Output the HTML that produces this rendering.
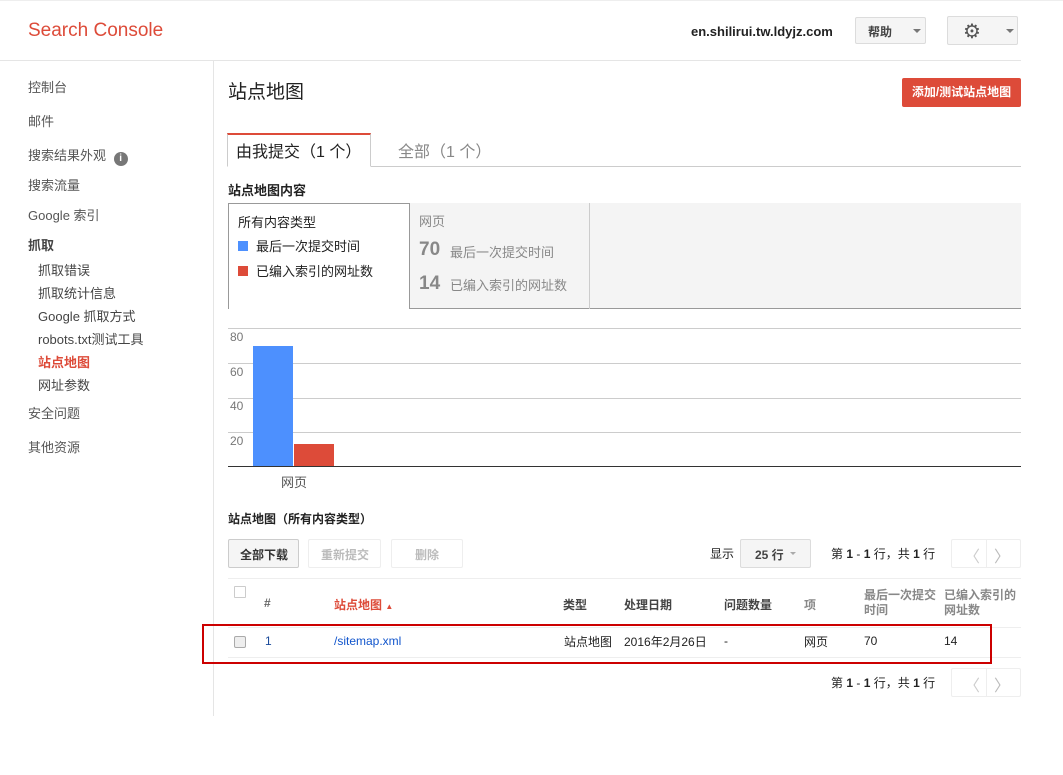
<!DOCTYPE html>
<html><head><meta charset="utf-8"><style>
*{margin:0;padding:0;box-sizing:border-box}
body{width:1063px;height:775px;background:#fff;font-family:"Liberation Sans","Noto Sans CJK SC",sans-serif;font-size:13px;color:#222;position:relative;overflow:hidden}
.a{position:absolute;white-space:nowrap}
.nav{left:28px;color:#555;font-size:13px}
.sub{left:38px;color:#444;font-size:13px}
.btn{position:absolute;border:1px solid #dcdcdc;background:#f5f5f5;border-radius:2px}
.g{position:absolute;left:228px;width:793px;height:1px;background:#ccc}
.th{top:596px;font-weight:bold;font-size:12px;color:#444}
.td{top:634px;font-size:12px;color:#222}
</style></head><body>
<div class="a" style="left:0;top:0;width:1063px;height:1px;background:#eee"></div>
<div class="a" style="left:28px;top:20px;font-size:19px;color:#dd4b39">Search Console</div>
<div class="a" style="left:691px;top:24px;font-size:13px;font-weight:bold;color:#222">en.shilirui.tw.ldyjz.com</div>
<div class="btn" style="left:855px;top:17px;width:71px;height:27px"><span class="a" style="left:12px;top:5px;font-weight:bold;font-size:12px;color:#444">帮助</span><span class="a" style="left:57px;top:11px;border:4px solid transparent;border-top-color:#777;border-bottom:0"></span></div>
<div class="btn" style="left:947px;top:16px;width:71px;height:29px"><span class="a" style="left:15px;top:2px;font-size:20px;color:#555">⚙</span><span class="a" style="left:58px;top:12px;border:4px solid transparent;border-top-color:#777;border-bottom:0"></span></div>
<div class="a" style="left:0;top:60px;width:1021px;height:1px;background:#e5e5e5"></div>
<div class="a" style="left:213px;top:61px;width:1px;height:655px;background:#e5e5e5"></div>

<div class="a nav" style="top:77px">控制台</div>
<div class="a nav" style="top:111px">邮件</div>
<div class="a nav" style="top:145px">搜索结果外观 <span style="display:inline-block;width:14px;height:14px;border-radius:7px;background:#777;color:#fff;font-size:10px;text-align:center;line-height:14px;font-weight:bold;margin-left:4px;vertical-align:-1px">i</span></div>
<div class="a nav" style="top:175px">搜索流量</div>
<div class="a nav" style="top:205px">Google 索引</div>
<div class="a nav" style="top:235px;font-weight:bold;color:#444">抓取</div>
<div class="a sub" style="top:260px">抓取错误</div>
<div class="a sub" style="top:283px">抓取统计信息</div>
<div class="a sub" style="top:306px">Google 抓取方式</div>
<div class="a sub" style="top:329px">robots.txt测试工具</div>
<div class="a sub" style="top:352px;color:#dd4b39;font-weight:bold">站点地图</div>
<div class="a sub" style="top:375px">网址参数</div>
<div class="a nav" style="top:403px">安全问题</div>
<div class="a nav" style="top:437px">其他资源</div>

<div class="a" style="left:228px;top:77px;font-size:19px;color:#222">站点地图</div>
<div class="a" style="left:902px;top:78px;width:119px;height:29px;background:#dd4b39;border-radius:2px;color:#fff;font-weight:bold;font-size:12px;text-align:center;line-height:29px">添加/测试站点地图</div>

<div class="a" style="left:228px;top:166px;width:793px;height:1px;background:#ccc"></div>
<div class="a" style="left:227px;top:133px;width:144px;height:34px;border:1px solid #ccc;border-top:2px solid #dd4b39;border-bottom:1px solid #fff;background:#fff"></div>
<div class="a" style="left:236px;top:138px;font-size:16px;color:#222">由我提交（1 个）</div>
<div class="a" style="left:398px;top:138px;font-size:16px;color:#888">全部（1 个）</div>

<div class="a" style="left:228px;top:180px;font-weight:bold;font-size:13px;color:#222">站点地图内容</div>
<div class="a" style="left:410px;top:203px;width:611px;height:106px;background:#f4f4f4;border-bottom:1px solid #999"></div>
<div class="a" style="left:589px;top:203px;width:1px;height:106px;background:#ccc"></div>
<div class="a" style="left:228px;top:203px;width:182px;height:106px;background:#fff;border:1px solid #999;border-bottom:0"></div>
<div class="a" style="left:238px;top:212px;color:#222">所有内容类型</div>
<div class="a" style="left:238px;top:241px;width:10px;height:10px;background:#4d90fe"></div>
<div class="a" style="left:256px;top:236px;color:#222">最后一次提交时间</div>
<div class="a" style="left:238px;top:266px;width:10px;height:10px;background:#dd4b39"></div>
<div class="a" style="left:256px;top:261px;color:#222">已编入索引的网址数</div>
<div class="a" style="left:419px;top:211px;color:#888">网页</div>
<div class="a" style="left:419px;top:239px;font-size:19px;font-weight:bold;color:#888">70</div>
<div class="a" style="left:450px;top:242px;color:#888">最后一次提交时间</div>
<div class="a" style="left:419px;top:273px;font-size:19px;font-weight:bold;color:#888">14</div>
<div class="a" style="left:450px;top:275px;color:#888">已编入索引的网址数</div>

<div class="g" style="top:328px"></div>
<div class="g" style="top:363px"></div>
<div class="g" style="top:398px"></div>
<div class="g" style="top:432px"></div>
<div class="a" style="left:228px;top:466px;width:793px;height:1px;background:#333"></div>
<div class="a" style="left:230px;top:330px;color:#777;font-size:12px">80</div>
<div class="a" style="left:230px;top:365px;color:#777;font-size:12px">60</div>
<div class="a" style="left:230px;top:399px;color:#777;font-size:12px">40</div>
<div class="a" style="left:230px;top:434px;color:#777;font-size:12px">20</div>
<div class="a" style="left:253px;top:346px;width:40px;height:120px;background:#4d90fe"></div>
<div class="a" style="left:294px;top:444px;width:40px;height:22px;background:#dd4b39"></div>
<div class="a" style="left:281px;top:472px;color:#555">网页</div>

<div class="a" style="left:228px;top:510px;font-weight:bold;font-size:12px;color:#222">站点地图（所有内容类型）</div>
<div class="btn" style="left:228px;top:539px;width:71px;height:29px;border-color:#ccc"><span class="a" style="left:11px;top:6px;font-weight:bold;font-size:12px;color:#333">全部下载</span></div>
<div class="btn" style="left:308px;top:539px;width:73px;height:29px;background:#fff;border-color:#eee"><span class="a" style="left:12px;top:6px;font-weight:bold;font-size:12px;color:#bbb">重新提交</span></div>
<div class="btn" style="left:391px;top:539px;width:72px;height:29px;background:#fff;border-color:#eee"><span class="a" style="left:23px;top:6px;font-weight:bold;font-size:12px;color:#bbb">删除</span></div>
<div class="a" style="left:710px;top:545px;font-size:12px">显示</div>
<div class="btn" style="left:740px;top:539px;width:71px;height:29px"><span class="a" style="left:14px;top:6px;font-weight:bold;font-size:12px;color:#444">25 行</span><span class="a" style="left:49px;top:12px;border:3px solid transparent;border-top-color:#aaa;border-bottom:0"></span></div>
<div class="a" style="left:831px;top:545px;font-size:12px">第 <b>1</b> - <b>1</b> 行，共 <b>1</b> 行</div>
<div class="btn" style="left:951px;top:539px;width:70px;height:29px;background:#fff;border-color:#eee"><span class="a" style="left:34px;top:0;width:1px;height:27px;background:#eee"></span><span class="a" style="left:12px;top:3px;color:#ccc;font-size:16px">〈</span><span class="a" style="left:42px;top:3px;color:#bbb;font-size:16px">〉</span></div>

<div class="a" style="left:228px;top:578px;width:793px;height:1px;background:#eee"></div>
<div class="a" style="left:234px;top:586px;width:12px;height:12px;border:1px solid #ccc;border-radius:1px"></div>
<div class="a th" style="left:264px;color:#666">#</div>
<div class="a th" style="left:334px;color:#dd4b39">站点地图 <span style="font-size:8px">▲</span></div>
<div class="a th" style="left:563px">类型</div>
<div class="a th" style="left:624px">处理日期</div>
<div class="a th" style="left:724px">问题数量</div>
<div class="a th" style="left:804px;color:#888">项</div>
<div class="a" style="left:864px;top:588px;font-weight:bold;font-size:12px;color:#888;line-height:15px">最后一次提交<br>时间</div>
<div class="a" style="left:944px;top:588px;font-weight:bold;font-size:12px;color:#888;line-height:15px">已编入索引的<br>网址数</div>
<div class="a" style="left:228px;top:627px;width:793px;height:1px;background:#eee"></div>
<div class="a" style="left:228px;top:657px;width:793px;height:1px;background:#eee"></div>
<div class="a" style="left:234px;top:636px;width:12px;height:12px;border:1px solid #aaa;border-radius:2px;background:#eee"></div>
<div class="a td" style="left:265px;color:#1a4a9a">1</div>
<div class="a td" style="left:334px;color:#1155cc">/sitemap.xml</div>
<div class="a td" style="left:564px;top:633px">站点地图</div>
<div class="a td" style="left:624px;top:633px">2016年2月26日</div>
<div class="a td" style="left:724px">-</div>
<div class="a td" style="left:804px;top:633px">网页</div>
<div class="a td" style="left:864px">70</div>
<div class="a td" style="left:944px">14</div>
<div class="a" style="left:202px;top:624px;width:790px;height:40px;border:2px solid #c00"></div>

<div class="a" style="left:831px;top:674px;font-size:12px">第 <b>1</b> - <b>1</b> 行，共 <b>1</b> 行</div>
<div class="btn" style="left:951px;top:668px;width:70px;height:29px;background:#fff;border-color:#eee"><span class="a" style="left:34px;top:0;width:1px;height:27px;background:#eee"></span><span class="a" style="left:12px;top:3px;color:#ccc;font-size:16px">〈</span><span class="a" style="left:42px;top:3px;color:#bbb;font-size:16px">〉</span></div>
</body></html>
